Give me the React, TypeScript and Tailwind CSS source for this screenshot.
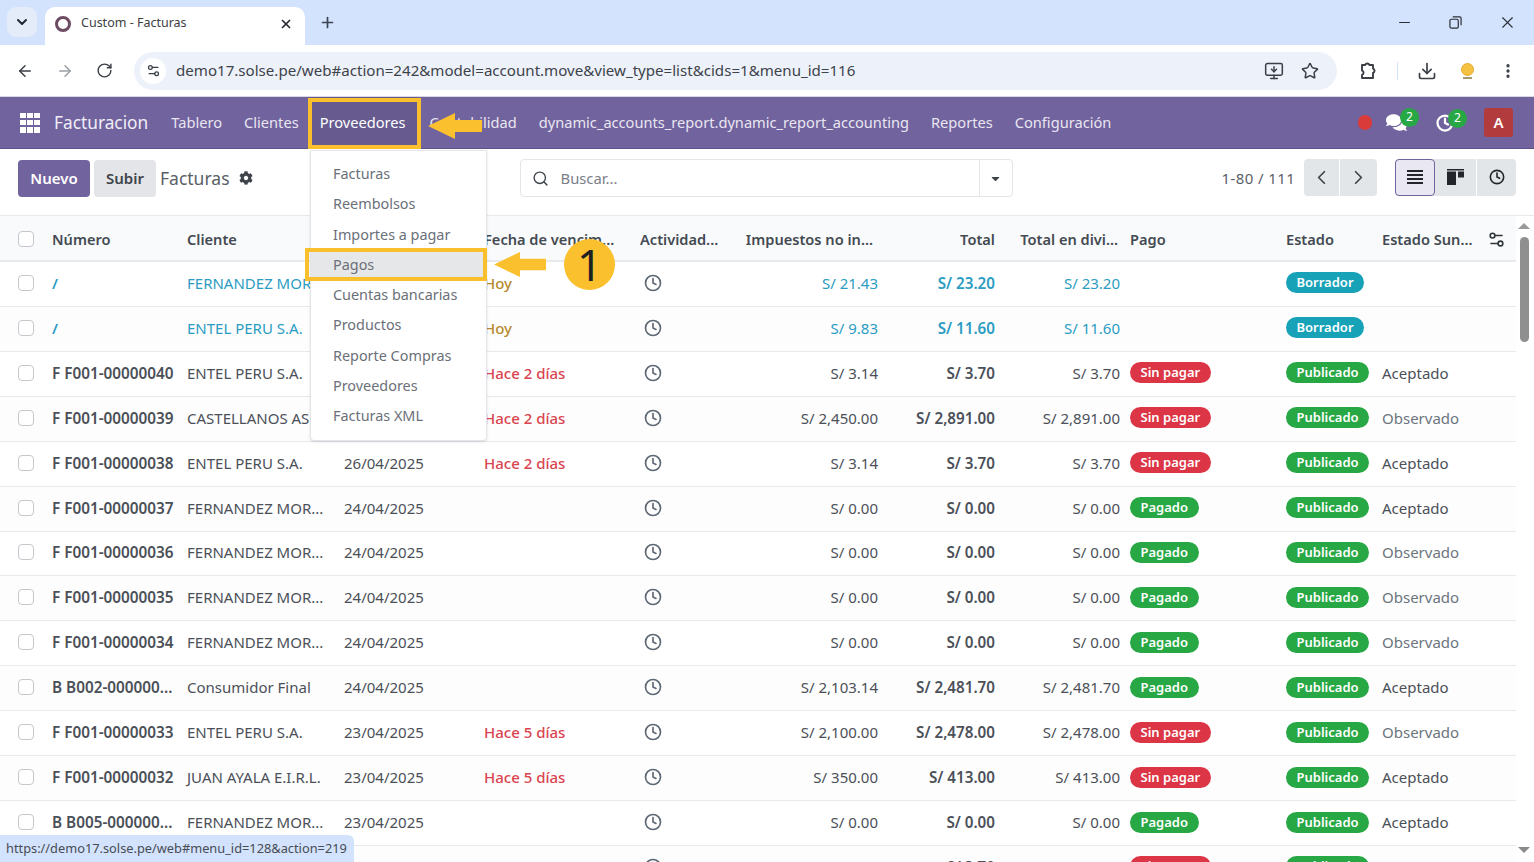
import React from 'react';
import {
  ArrowLeft,
  ArrowRight,
  ChevronDown,
  ChevronLeft,
  ChevronRight,
  Clock,
  Download,
  EllipsisVertical,
  Minus,
  MonitorDown,
  Plus,
  RotateCw,
  Search,
  Settings2,
  Star,
  X,
} from 'lucide-react';
import { FaCaretDown, FaCog, FaComments } from 'react-icons/fa';

interface Row {
  numero: string;
  cliente: string;
  fecha: string;
  venc?: string;
  vencColor?: 'warn' | 'late';
  imp: string;
  total: string;
  draft?: boolean;
  pago?: 'Sin pagar' | 'Pagado';
  sunat?: string;
}

const rows: Row[] = [
  { numero: '/', cliente: 'FERNANDEZ MOR...', fecha: '28/04/2025', venc: 'Hoy', vencColor: 'warn', imp: 'S/ 21.43', total: 'S/ 23.20', draft: true },
  { numero: '/', cliente: 'ENTEL PERU S.A.', fecha: '28/04/2025', venc: 'Hoy', vencColor: 'warn', imp: 'S/ 9.83', total: 'S/ 11.60', draft: true },
  { numero: 'F F001-00000040', cliente: 'ENTEL PERU S.A.', fecha: '26/04/2025', venc: 'Hace 2 días', vencColor: 'late', imp: 'S/ 3.14', total: 'S/ 3.70', pago: 'Sin pagar', sunat: 'Aceptado' },
  { numero: 'F F001-00000039', cliente: 'CASTELLANOS AS...', fecha: '26/04/2025', venc: 'Hace 2 días', vencColor: 'late', imp: 'S/ 2,450.00', total: 'S/ 2,891.00', pago: 'Sin pagar', sunat: 'Observado' },
  { numero: 'F F001-00000038', cliente: 'ENTEL PERU S.A.', fecha: '26/04/2025', venc: 'Hace 2 días', vencColor: 'late', imp: 'S/ 3.14', total: 'S/ 3.70', pago: 'Sin pagar', sunat: 'Aceptado' },
  { numero: 'F F001-00000037', cliente: 'FERNANDEZ MOR...', fecha: '24/04/2025', imp: 'S/ 0.00', total: 'S/ 0.00', pago: 'Pagado', sunat: 'Aceptado' },
  { numero: 'F F001-00000036', cliente: 'FERNANDEZ MOR...', fecha: '24/04/2025', imp: 'S/ 0.00', total: 'S/ 0.00', pago: 'Pagado', sunat: 'Observado' },
  { numero: 'F F001-00000035', cliente: 'FERNANDEZ MOR...', fecha: '24/04/2025', imp: 'S/ 0.00', total: 'S/ 0.00', pago: 'Pagado', sunat: 'Observado' },
  { numero: 'F F001-00000034', cliente: 'FERNANDEZ MOR...', fecha: '24/04/2025', imp: 'S/ 0.00', total: 'S/ 0.00', pago: 'Pagado', sunat: 'Observado' },
  { numero: 'B B002-000000...', cliente: 'Consumidor Final', fecha: '24/04/2025', imp: 'S/ 2,103.14', total: 'S/ 2,481.70', pago: 'Pagado', sunat: 'Aceptado' },
  { numero: 'F F001-00000033', cliente: 'ENTEL PERU S.A.', fecha: '23/04/2025', venc: 'Hace 5 días', vencColor: 'late', imp: 'S/ 2,100.00', total: 'S/ 2,478.00', pago: 'Sin pagar', sunat: 'Observado' },
  { numero: 'F F001-00000032', cliente: 'JUAN AYALA E.I.R.L.', fecha: '23/04/2025', venc: 'Hace 5 días', vencColor: 'late', imp: 'S/ 350.00', total: 'S/ 413.00', pago: 'Sin pagar', sunat: 'Aceptado' },
  { numero: 'B B005-000000...', cliente: 'FERNANDEZ MOR...', fecha: '23/04/2025', imp: 'S/ 0.00', total: 'S/ 0.00', pago: 'Pagado', sunat: 'Aceptado' },
  { numero: 'F F001-00000031', cliente: 'ENTEL PERU S.A.', fecha: '23/04/2025', venc: 'Hace 5 días', vencColor: 'late', imp: 'S/ 3.14', total: 'S/ 3.70', pago: 'Sin pagar', sunat: 'Aceptado' },
];

const menuItems = ['Facturas', 'Reembolsos', 'Importes a pagar', 'Pagos', 'Cuentas bancarias', 'Productos', 'Reporte Compras', 'Proveedores', 'Facturas XML'];

const gridCols = 'grid grid-cols-[52px_135px_157px_140px_156px_105px_133px_117px_125px_10px_156px_96px_1fr] items-center';

const Checkbox = () => <span className="block w-[16px] h-[16px] ml-[18px] rounded-[4px] border border-[#c4c8cd] bg-white" />;

const Pill = ({ label, color }: { label: string; color: string }) => (
  <span className={`inline-block h-[21px] leading-[20px] px-[10.5px] rounded-full text-white font-semibold text-[13px] -translate-y-[1px] ${color}`}>{label}</span>
);

const Arrow = ({ className }: { className: string }) => (
  <svg viewBox="0 0 54 26" className={className}>
    <polygon points="0,13 27,0 27,7 54,7 54,19 27,19 27,26" fill="#fbc02d" />
  </svg>
);

const App = () => {
  return (
    <div className="relative w-[1534px] h-[862px] overflow-hidden bg-white text-[#4b5058] font-['Noto_Sans',sans-serif]">
      {/* tab strip */}
      <div className="flex items-end h-[45px] bg-[#d3e3fd]">
        <div className="w-[30px] h-[30px] ml-[7px] mb-[8px] rounded-[9px] bg-[#e4ecfa] flex items-center justify-center">
          <ChevronDown size={16} strokeWidth={3} className="text-[#1f2937]" />
        </div>
        <div className="w-[260px] h-[38px] ml-[8px] rounded-t-[10px] bg-white flex items-center pl-[10px] pr-[12px] pb-[5px]">
          <span className="w-[16px] h-[16px] rounded-full border-[3px] border-[#6d4b62]" />
          <span className="ml-[10px] text-[12.5px] text-[#3c4043] flex-1">Custom - Facturas</span>
          <X size={14} strokeWidth={3} className="text-[#2a2d31]" />
        </div>
        <Plus size={17} strokeWidth={2.4} className="ml-[14px] mb-[14px] text-[#3c4655]" />
        <div className="ml-auto flex items-center self-start h-[45px] text-[#2b2f36]">
          <Minus size={17} strokeWidth={1.5} />
          <svg viewBox="0 0 14 14" className="w-[13px] h-[13px] ml-[36px]" fill="none" stroke="currentColor" strokeWidth="1.3">
            <rect x="1" y="3.5" width="9" height="9.5" rx="1.5" />
            <path d="M4 1h7.5a1.5 1.5 0 0 1 1.5 1.5V10" />
          </svg>
          <X size={19} strokeWidth={1.4} className="ml-[36px] mr-[17px]" />
        </div>
      </div>

      {/* browser toolbar */}
      <div className="flex items-center h-[52px] bg-white rounded-t-[10px] border-b border-[#d7d9e2] text-[#3a3f46]">
        <ArrowLeft size={18} strokeWidth={2} className="ml-[16px]" />
        <ArrowRight size={18} strokeWidth={2} className="ml-[22px] text-[#9aa0a6]" />
        <RotateCw size={17} strokeWidth={2} className="ml-[22px]" />
        <div className="flex items-center w-[1203px] h-[38px] ml-[21px] rounded-full bg-[#edf2fa]">
          <span className="flex items-center justify-center w-[26px] h-[26px] ml-[6px] rounded-full bg-white">
            <Settings2 size={15} strokeWidth={2} />
          </span>
          <span className="ml-[10px] text-[15.1px] text-[#3e434a]">demo17.solse.pe/web#action=242&amp;model=account.move&amp;view_type=list&amp;cids=1&amp;menu_id=116</span>
          <MonitorDown size={20} strokeWidth={1.8} className="ml-auto" />
          <Star size={18} strokeWidth={2} className="ml-[17px] mr-[18px]" />
        </div>
        <svg viewBox="0 0 20 20" className="w-[20px] h-[20px] ml-[20px]" fill="none" stroke="currentColor" strokeWidth="1.9" strokeLinejoin="round">
          <path d="M5 4h3.2a2.2 2.2 0 0 1 4.2 0H16v3.6a2.2 2.2 0 0 1 0 4.2V17H5v-3.2a2.2 2.2 0 0 0 0-4.2z" />
        </svg>
        <span className="w-px h-[18px] ml-[20px] bg-[#d3e3fd]" />
        <Download size={20} strokeWidth={2} className="ml-[19px]" />
        <span className="flex flex-col items-center ml-[24px]">
          <span className="w-[13px] h-[13px] rounded-full bg-[#f5c242] border border-[#e6a92f]" />
          <span className="w-[9px] h-[2px] mt-[1px] bg-[#a79a72]" />
        </span>
        <EllipsisVertical size={18} strokeWidth={2.4} className="ml-[25px]" />
      </div>

      {/* odoo navbar */}
      <nav className="flex items-center h-[52px] bg-[#71639e] text-white border-b border-[#5f5389] text-[14.64px]">
        <span className="grid grid-cols-3 gap-[1.5px] w-[20px] h-[20px] ml-[20px]">
          {Array.from({ length: 9 }).map((_, i) => (
            <span key={i} className="bg-white" />
          ))}
        </span>
        <span className="ml-[14px] text-[17.3px] text-[#f0eef6]">Facturacion</span>
        <span className="ml-[23px] text-[#e9e6f1]">Tablero</span>
        <span className="ml-[22px] text-[#e9e6f1]">Clientes</span>
        <span className="flex items-center h-[51px] ml-[9px] px-[12px] bg-[#665a8f]">Proveedores</span>
        <span className="ml-[12px] text-[#e9e6f1]">Contabilidad</span>
        <span className="ml-[22px] text-[#e9e6f1]">dynamic_accounts_report.dynamic_report_accounting</span>
        <span className="ml-[22px] text-[#e9e6f1]">Reportes</span>
        <span className="ml-[22px] text-[#e9e6f1]">Configuración</span>
        <span className="ml-auto w-[14px] h-[15px] rounded-full bg-[#d93a3a]" />
        <span className="relative ml-[14px]">
          <FaComments size={21} className="text-white block" />
          <span className="absolute -top-[4px] left-[14px] w-[19px] h-[19px] rounded-full bg-[#28a745] text-[12px] leading-[18px] text-center">2</span>
        </span>
        <span className="relative ml-[29px]">
          <Clock size={18} strokeWidth={3} className="block" />
          <span className="absolute -top-[5px] left-[12px] w-[19px] h-[19px] rounded-full bg-[#28a745] text-[12px] leading-[18px] text-center">2</span>
        </span>
        <span className="flex items-center justify-center w-[29px] h-[29px] ml-[30px] mr-[21px] rounded-[3px] bg-[#b23b3d] text-[15px] font-semibold">A</span>
      </nav>

      {/* control panel */}
      <div className="flex items-center h-[67px] pb-[8px] border-b border-[#e7e9ed]">
        <button className="w-[72px] h-[37px] ml-[18px] rounded-[4px] bg-[#71639e] text-white text-[15px] font-semibold">Nuevo</button>
        <button className="w-[62px] h-[37px] ml-[4px] rounded-[4px] bg-[#e3e5e8] text-[#3f444b] text-[15px] font-semibold">Subir</button>
        <span className="ml-[4px] text-[17.5px] text-[#5a5f67]">Facturas</span>
        <FaCog size={14} className="ml-[9px] text-[#3f444b]" />
        <div className="flex items-center w-[493px] h-[38px] ml-[267px] rounded-[4px] border border-[#e3e5e8]">
          <Search size={17} strokeWidth={2} className="ml-[11px] text-[#40454c]" />
          <span className="ml-[12px] text-[14.8px] text-[#7b8089] flex-1">Buscar...</span>
          <span className="flex items-center justify-center w-[33px] h-full border-l border-[#e3e5e8]">
            <FaCaretDown size={13} className="text-[#3f444b]" />
          </span>
        </div>
        <span className="ml-[209px] text-[15px] tracking-[0.4px] text-[#5a5f67]">1-80 / 111</span>
        <div className="flex h-[37px] ml-[9px] mb-[2px] rounded-[4px] bg-[#e3e6e9] text-[#3f444b]">
          <span className="flex items-center justify-center w-[36px] border-r border-white"><ChevronLeft size={23} strokeWidth={1.8} /></span>
          <span className="flex items-center justify-center w-[37px]"><ChevronRight size={23} strokeWidth={1.8} /></span>
        </div>
        <div className="flex h-[37px] ml-[18px] mb-[2px] rounded-[4px] bg-[#e3e6e9] text-[#22262b]">
          <span className="flex flex-col justify-center gap-[2px] items-center w-[40px] rounded-[4px] border border-[#71639e] bg-[#e9e7f2]">
            <span className="w-[16px] h-[2px] bg-[#22262b]" />
            <span className="w-[16px] h-[2px] bg-[#22262b]" />
            <span className="w-[16px] h-[2px] bg-[#22262b]" />
            <span className="w-[16px] h-[2px] bg-[#22262b]" />
          </span>
          <span className="flex items-center justify-center w-[42px] border-r border-white">
            <svg viewBox="0 0 17 16" className="w-[17px] h-[16px]" fill="currentColor">
              <rect x="0" y="0" width="17" height="1.5" />
              <rect x="0" y="2.5" width="9" height="13.5" />
              <rect x="11" y="2.5" width="6" height="6" />
            </svg>
          </span>
          <span className="flex items-center justify-center w-[39px]"><Clock size={16} strokeWidth={2.4} /></span>
        </div>
      </div>

      {/* invoices list */}
      <div className="w-[1516px] text-[15px] leading-[22px]">
        <div className={`${gridCols} h-[46px] pt-[2px] text-[14.6px] bg-[#f9fafb] border-b-2 border-[#e7e9ed] font-semibold text-[#444a52]`}>
          <Checkbox />
          <span>Número</span>
          <span>Cliente</span>
          <span>Fecha</span>
          <span className="truncate">Fecha de vencim...</span>
          <span>Actividad...</span>
          <span className="text-right pr-[5px]">Impuestos no in...</span>
          <span className="text-right">Total</span>
          <span className="text-right pr-[2px]">Total en divi...</span>
          <span />
          <span>Pago</span>
          <span>Estado</span>
          <span className="flex items-center justify-between pr-[10px]">
            Estado Sun...
            <Settings2 size={19} strokeWidth={2} className="text-[#30353b]" />
          </span>
        </div>
        {rows.map((row, i) => (
          <div key={i} className={`${gridCols} h-[44.93px] pb-[2px] border-b border-[#e7e9ed] ${i % 2 === 0 ? 'bg-white' : 'bg-[#fdfdfd]'}`}>
            <Checkbox />
            <span className={row.draft ? 'font-semibold text-[#2b9cc2]' : 'font-semibold text-[15.3px] text-[#4b5058]'}>{row.numero}</span>
            <span className={row.draft ? 'text-[#2b9cc2]' : ''}>{row.cliente}</span>
            <span>{row.fecha}</span>
            <span className={`font-medium ${row.vencColor === 'warn' ? 'text-[#b58a2c]' : 'text-[#d9444f]'}`}>{row.venc}</span>
            <span className="pl-[4px]"><Clock size={18} strokeWidth={2.2} className="text-[#5d6874]" /></span>
            <span className={`text-right ${row.draft ? 'text-[#2b9cc2]' : ''}`}>{row.imp}</span>
            <span className={`text-right font-semibold text-[15.2px] ${row.draft ? 'text-[#2b9cc2]' : ''}`}>{row.total}</span>
            <span className={`text-right ${row.draft ? 'text-[#2b9cc2]' : ''}`}>{row.total}</span>
            <span />
            <span>{row.pago && <Pill label={row.pago} color={row.pago === 'Pagado' ? 'bg-[#28a745]' : 'bg-[#dc3545]'} />}</span>
            <span>{row.draft ? <Pill label="Borrador" color="bg-[#17a2b8]" /> : <Pill label="Publicado" color="bg-[#28a745]" />}</span>
            <span className={row.sunat === 'Observado' ? 'text-[#6c757d]' : ''}>{row.sunat}</span>
          </div>
        ))}
      </div>

      {/* scrollbar */}
      <div className="absolute top-[217px] right-[2px] bottom-0 w-[16px] flex flex-col items-center bg-white">
        <span className="mt-[6px] w-0 h-0 border-x-[6px] border-x-transparent border-b-[6px] border-b-[#9a9a9a]" />
        <span className="mt-[8px] w-[9px] h-[105px] rounded-full bg-[#8f8f8f]" />
        <span className="mt-auto mb-[9px] w-0 h-0 border-x-[6px] border-x-transparent border-t-[6px] border-t-[#8a8a8a]" />
      </div>

      {/* Proveedores dropdown */}
      <div className="absolute top-[150px] left-[310px] w-[177px] h-[291px] pt-[8px] bg-white rounded-b-[4px] border border-[#e3e5e8] shadow-sm">
        {menuItems.map((item) => (
          <div key={item} className={`h-[30.3px] leading-[30px] pl-[22px] text-[14.4px] text-[#6b7078] ${item === 'Pagos' ? 'bg-[#e6e7e8] text-[#4b5058]' : ''}`}>
            {item}
          </div>
        ))}
      </div>

      {/* tutorial marks */}
      <div className="absolute top-[98px] left-[308px] w-[113px] h-[51px] border-[4px] border-[#f9bf2c]" />
      <div className="absolute top-[248px] left-[305px] w-[182px] h-[33px] border-[4px] border-[#f9bf2c]" />
      <Arrow className="absolute top-[113px] left-[428px] w-[54px] h-[26px]" />
      <Arrow className="absolute top-[252px] left-[493px] w-[54px] h-[25px]" />
      <div className="absolute top-[239px] left-[564px] w-[51px] h-[51px] rounded-full bg-[#fbc02d] text-[#1e2024] text-[44px] leading-[51px] text-center font-['Liberation_Sans',sans-serif]">1</div>

      {/* link status bubble */}
      <div className="absolute left-0 bottom-0 h-[27px] leading-[26px] pl-[6px] pr-[7px] rounded-tr-[6px] bg-[#d3e3fd] text-[12.8px] text-[#474c54]">
        https://demo17.solse.pe/web#menu_id=128&amp;action=219
      </div>
    </div>
  );
};

export default App;
